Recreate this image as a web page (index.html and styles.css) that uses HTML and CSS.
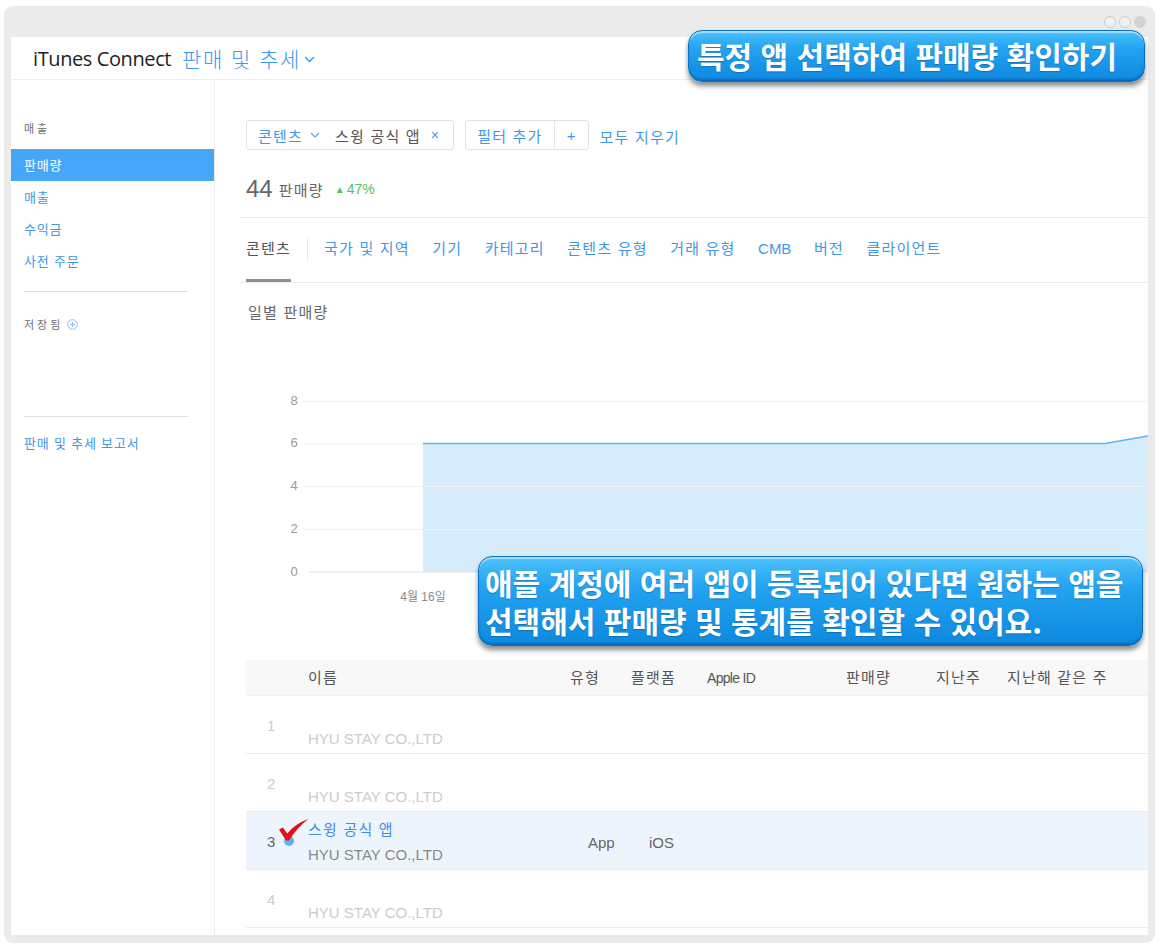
FILE: index.html
```html
<!DOCTYPE html>
<html lang="ko">
<head>
<meta charset="utf-8">
<title>iTunes Connect - 판매 및 추세</title>
<link rel="stylesheet" href="styles.css">
</head>
<body>
<div class="window">
  <div class="titlebar">
    <span class="light"></span><span class="light"></span><span class="light filled"></span>
  </div>
  <div class="app">
    <header class="topbar">
      <span class="brand">iTunes Connect</span>
      <span class="section">판매 및 추세
        <svg class="section-chev" width="11" height="7" viewBox="0 0 11 7"><polyline points="1,1 5.5,5.5 10,1" fill="none" stroke="#3a97ee" stroke-width="1.3"/></svg>
      </span>
    </header>
    <div class="body">
      <aside class="sidebar">
        <div class="side-heading">매출</div>
        <ul class="side-nav">
          <li class="active">판매량</li>
          <li>매출</li>
          <li>수익금</li>
          <li>사전 주문</li>
        </ul>
        <div class="side-rule"></div>
        <div class="side-heading saved">저장됨
          <svg class="plus-circle" width="11" height="11" viewBox="0 0 11 11"><circle cx="5.5" cy="5.5" r="4.8" fill="none" stroke="#8dbdee" stroke-width="1"/><path d="M5.5 3v5M3 5.5h5" stroke="#8dbdee" stroke-width="1"/></svg>
        </div>
        <div class="side-rule rule-low"></div>
        <div class="side-link">판매 및 추세 보고서</div>
      </aside>
      <main class="main">
        <div class="filters">
          <div class="chip">
            <span class="chip-key">콘텐츠</span>
            <svg class="chip-chev" width="10" height="6" viewBox="0 0 10 6"><polyline points="1,1 5,5 9,1" fill="none" stroke="#5aa3ea" stroke-width="1.2"/></svg>
            <span class="chip-val">스윙 공식 앱</span>
            <span class="chip-x">×</span>
          </div>
          <div class="chip chip-add">
            <span class="chip-key">필터 추가</span>
            <span class="chip-div"></span>
            <span class="chip-plus">+</span>
          </div>
          <span class="clear-all">모두 지우기</span>
        </div>
        <div class="stats">
          <span class="stat-num">44</span>
          <span class="stat-label">판매량</span>
          <span class="stat-delta"><span class="tri">▲</span>47%</span>
        </div>
        <nav class="tabs">
          <span class="tab active">콘텐츠</span>
          <span class="tab-sep"></span>
          <span class="tab">국가 및 지역</span>
          <span class="tab">기기</span>
          <span class="tab">카테고리</span>
          <span class="tab">콘텐츠 유형</span>
          <span class="tab">거래 유형</span>
          <span class="tab latin">CMB</span>
          <span class="tab">버전</span>
          <span class="tab">클라이언트</span>
        </nav>
        <div class="chart-title">일별 판매량</div>
        <svg class="chart" width="902" height="225" viewBox="0 0 902 225">
          <polygon points="177,54.5 859,54.5 902,47 902,183 177,183" fill="#d7ecfb"/>
          <g stroke="#eef0f2" stroke-width="1">
            <line x1="57" y1="12.5" x2="902" y2="12.5"/>
            <line x1="57" y1="55" x2="177" y2="55"/>
            <line x1="57" y1="97.5" x2="902" y2="97.5"/>
            <line x1="57" y1="140.5" x2="902" y2="140.5"/>
          </g>
          <line x1="63" y1="183" x2="902" y2="183" stroke="#e3e3e3" stroke-width="1"/>
          <polyline points="177,54.5 859,54.5 902,47" fill="none" stroke="#5db5ee" stroke-width="1.5"/>
          <g class="axis" fill="#9a9a9a" font-size="13" text-anchor="middle">
            <text x="48" y="16">8</text>
            <text x="48" y="58">6</text>
            <text x="48" y="101">4</text>
            <text x="48" y="144">2</text>
            <text x="48" y="187">0</text>
          </g>
          <text class="xlabel" x="177" y="212" fill="#8a8a8a" font-size="12" text-anchor="middle">4월 16일</text>
        </svg>
        <div class="table">
          <div class="trow thead">
            <span></span><span>이름</span><span>유형</span><span>플랫폼</span><span class="latin">Apple ID</span><span>판매량</span><span>지난주</span><span>지난해 같은 주</span>
          </div>
          <div class="trow faded">
            <span class="num">1</span>
            <span class="name"><span class="title"></span><span class="company">HYU STAY CO.,LTD</span></span>
            <span class="cell"></span><span class="cell"></span>
          </div>
          <div class="trow faded">
            <span class="num">2</span>
            <span class="name"><span class="title"></span><span class="company">HYU STAY CO.,LTD</span></span>
            <span class="cell"></span><span class="cell"></span>
          </div>
          <div class="trow selected">
            <span class="num">3
              <span class="sel-dot"></span>
              <svg class="check" width="30" height="22" viewBox="0 0 30 22"><path d="M0 10.5 L3.8 8.4 L8.2 14.4 Q16.5 4.5 29.5 0 Q18.5 8 10 21.5 L7 21.5 Z" fill="#e3101b"/></svg>
            </span>
            <span class="name"><span class="title">스윙 공식 앱</span><span class="company">HYU STAY CO.,LTD</span></span>
            <span class="cell">App</span><span class="cell">iOS</span>
          </div>
          <div class="trow faded">
            <span class="num">4</span>
            <span class="name"><span class="title"></span><span class="company">HYU STAY CO.,LTD</span></span>
            <span class="cell"></span><span class="cell"></span>
          </div>
        </div>
      </main>
    </div>
  </div>
  <div class="callout callout-top">특정 앱 선택하여 판매량 확인하기</div>
  <div class="callout callout-mid">
    <div class="callout-line">애플 계정에 여러 앱이 등록되어 있다면 원하는 앱을</div>
    <div class="callout-line">선택해서 판매량 및 통계를 확인할 수 있어요.</div>
  </div>
</div>
</body>
</html>
```

FILE: styles.css
```css
body {
  margin: 0;
  background: #ffffff;
  font-family: "Liberation Sans", "Noto Sans CJK KR", sans-serif;
  color: #555;
}

.window {
  position: relative;
  margin: 6px 0 0 4px;
  width: 1151px;
  height: 937px;
  box-sizing: border-box;
  padding: 0 7px 8px;
  background: #ebebeb;
  border-radius: 9px;
}

.titlebar {
  height: 31px;
  display: flex;
  justify-content: flex-end;
  align-items: center;
  gap: 3px;
  padding-right: 2px;
}

.light {
  width: 10px;
  height: 10px;
  border: 1px solid #cdcdcd;
  border-radius: 50%;
  background: #f1f1f1;
}

.light.filled {
  background: #d3d3d3;
  border-color: #d3d3d3;
}

.app {
  height: 898px;
  background: #fff;
  overflow: hidden;
  display: flex;
  flex-direction: column;
}

/* header */
.topbar {
  height: 43px;
  flex: none;
  box-sizing: border-box;
  border-bottom: 1px solid #ededed;
  display: flex;
  align-items: center;
  padding-left: 22px;
}

.brand {
  font-family: "Open Sans", "Liberation Sans", sans-serif;
  font-size: 20px;
  font-weight: 500;
  letter-spacing: -0.4px;
  color: #1e1e1e;
}

.section {
  margin-left: 11px;
  display: flex;
  align-items: center;
  font-family: "Noto Sans CJK KR", sans-serif;
  font-weight: 300;
  font-size: 21px;
  letter-spacing: 1.5px;
  color: #3a97ee;
}

.section-chev {
  margin-left: 3px;
  margin-top: 3px;
}

.body {
  flex: 1;
  display: flex;
  min-height: 0;
}

/* sidebar */
.sidebar {
  width: 203px;
  flex: none;
  border-right: 1px solid #ededed;
}

.side-heading {
  margin-top: 38px;
  height: 20px;
  line-height: 20px;
  padding-left: 13px;
  font-family: "Noto Sans CJK KR", sans-serif;
  font-size: 11px;
  letter-spacing: 3px;
  color: #707070;
  display: flex;
  align-items: center;
}

.side-heading.saved {
  margin-top: 22px;
}

.plus-circle {
  margin-left: 4px;
}

.side-nav {
  list-style: none;
  margin: 11px 0 0;
  padding: 0;
}

.side-nav li {
  height: 32px;
  line-height: 32px;
  padding-left: 13px;
  font-family: "Noto Sans CJK KR", sans-serif;
  font-size: 13px;
  letter-spacing: 0.8px;
  color: #3f97ea;
}

.side-nav li.active {
  background: #46a6f7;
  color: #fff;
}

.side-rule {
  margin: 14px 26px 0 13px;
  height: 1px;
  background: #dedede;
}

.side-rule.rule-low {
  margin-top: 82px;
}

.side-link {
  margin-top: 16px;
  height: 20px;
  line-height: 20px;
  padding-left: 13px;
  font-family: "Noto Sans CJK KR", sans-serif;
  font-size: 13px;
  letter-spacing: 0.8px;
  color: #3f97ea;
}

/* main */
.main {
  flex: 1;
  min-width: 0;
  padding-left: 25px;
}

.filters {
  margin: 40px 0 0 6px;
  height: 30px;
  display: flex;
  align-items: center;
  gap: 11px;
  font-family: "Noto Sans CJK KR", sans-serif;
  font-size: 15px;
  letter-spacing: 1.2px;
}

.chip {
  height: 30px;
  box-sizing: border-box;
  border: 1px solid #e2e2e2;
  border-radius: 3px;
  display: flex;
  align-items: center;
  padding: 0 13px 0 11px;
}

.chip-key {
  color: #3f97ea;
}

.chip-chev {
  margin-left: 7px;
}

.chip-val {
  margin-left: 15px;
  color: #555;
}

.chip-x {
  margin-left: 10px;
  font-family: "Liberation Sans", sans-serif;
  font-size: 14px;
  color: #3f97ea;
}

.chip-add {
  padding: 0 11px 0 11px;
}

.chip-div {
  align-self: stretch;
  width: 1px;
  background: #e6e6e6;
  margin: 0 12px 0 11px;
}

.chip-plus {
  font-family: "Liberation Sans", sans-serif;
  font-size: 15px;
  color: #3f97ea;
}

.clear-all {
  color: #3f97ea;
  margin-top: 3px;
}

.stats {
  height: 68px;
  box-sizing: border-box;
  padding: 11px 0 0 6px;
  border-bottom: 1px solid #ececec;
  display: flex;
  align-items: center;
}

.stat-num {
  font-size: 24px;
  color: #666;
}

.stat-label {
  margin-left: 6px;
  font-family: "Noto Sans CJK KR", sans-serif;
  font-size: 15px;
  letter-spacing: 1.2px;
  color: #666;
}

.stat-delta {
  margin-left: 11px;
  font-size: 14px;
  color: #55c155;
}

.tri {
  font-size: 10px;
  margin-right: 2px;
  vertical-align: 1px;
}

.tabs {
  height: 65px;
  box-sizing: border-box;
  border-bottom: 1px solid #ececec;
  display: flex;
  padding-left: 6px;
  font-family: "Liberation Sans", "Noto Sans CJK KR", sans-serif;
  font-size: 15px;
  letter-spacing: 1.2px;
}

.tab {
  padding-top: 20px;
  line-height: 22px;
  margin-right: 22.5px;
  color: #3f97ea;
  white-space: nowrap;
}

.tab.latin {
  letter-spacing: 0;
}

.tab.active {
  color: #555;
  margin-right: 16px;
  box-shadow: inset 0 -3px 0 #8e8e8e;
}

.tab-sep {
  width: 1px;
  height: 24px;
  margin: 19px 16px 0 0;
  background: #e8e8e8;
}

.chart-title {
  margin: 18px 0 0 8px;
  height: 22px;
  line-height: 22px;
  font-family: "Noto Sans CJK KR", sans-serif;
  font-size: 15px;
  letter-spacing: 1.2px;
  color: #666;
}

.chart {
  display: block;
  margin: 66px 0 0 6px;
  font-family: "Liberation Sans", "Noto Sans CJK KR", sans-serif;
}

/* table */
.table {
  margin: 46px 0 0 6px;
  font-size: 15px;
}

.trow {
  display: grid;
  grid-template-columns: 62px 262px 61px 76px 139px 90px 71px 1fr;
  height: 58px;
  box-sizing: border-box;
  border-bottom: 1px solid #ececec;
}

.trow.thead {
  height: 36px;
  border-bottom: 1px solid #f0f0f0;
  background: #f8f8f8;
  line-height: 36px;
  color: #555;
  white-space: nowrap;
  letter-spacing: 1.2px;
}

.thead .latin {
  font-size: 14px;
  letter-spacing: -0.7px;
}

.trow.selected {
  background: #eef4fc;
}

.num {
  position: relative;
  padding-left: 21px;
  display: flex;
  align-items: center;
  padding-top: 2px;
  color: #ccc;
}

.selected .num {
  color: #666;
}

.name {
  display: flex;
  flex-direction: column;
  padding-top: 6px;
}

.title {
  height: 22px;
  line-height: 22px;
  font-family: "Noto Sans CJK KR", sans-serif;
  font-size: 15px;
  letter-spacing: 1.2px;
  color: #3f8fe6;
}

.company {
  margin-top: 4px;
  height: 22px;
  line-height: 22px;
  color: #ccc;
  white-space: nowrap;
}

.selected .company {
  color: #888;
}

.cell {
  padding: 4px 0 0 18px;
  display: flex;
  align-items: center;
  color: #666;
}

.sel-dot {
  position: absolute;
  left: 38px;
  top: 24px;
  width: 10px;
  height: 10px;
  border-radius: 50%;
  background: #5cb3ef;
}

.check {
  position: absolute;
  left: 33px;
  top: 7px;
}

/* callouts */
.callout {
  position: absolute;
  box-sizing: border-box;
  font-family: "Noto Sans CJK KR", sans-serif;
  font-weight: 700;
  color: #fff;
  white-space: nowrap;
  background: linear-gradient(to bottom, #4cc0fb 0%, #23a3f1 35%, #0d88de 100%);
  border: 1px solid #0b72c2;
  border-radius: 14px;
  box-shadow: 0 4px 5px rgba(0, 0, 0, 0.45), inset 0 2px 1px rgba(255, 255, 255, 0.5), inset 0 -2px 2px rgba(0, 50, 130, 0.35);
  text-shadow: 0 1px 1px rgba(0, 40, 100, 0.3);
}

.callout-top {
  left: 684px;
  top: 24px;
  width: 457px;
  height: 52px;
  padding-left: 8px;
  font-size: 30px;
  line-height: 49px;
}

.callout-mid {
  left: 474px;
  top: 550px;
  width: 665px;
  height: 90px;
  padding: 6px 0 0 6px;
  font-size: 30px;
}

.callout-line {
  height: 38px;
  line-height: 38px;
}
```
